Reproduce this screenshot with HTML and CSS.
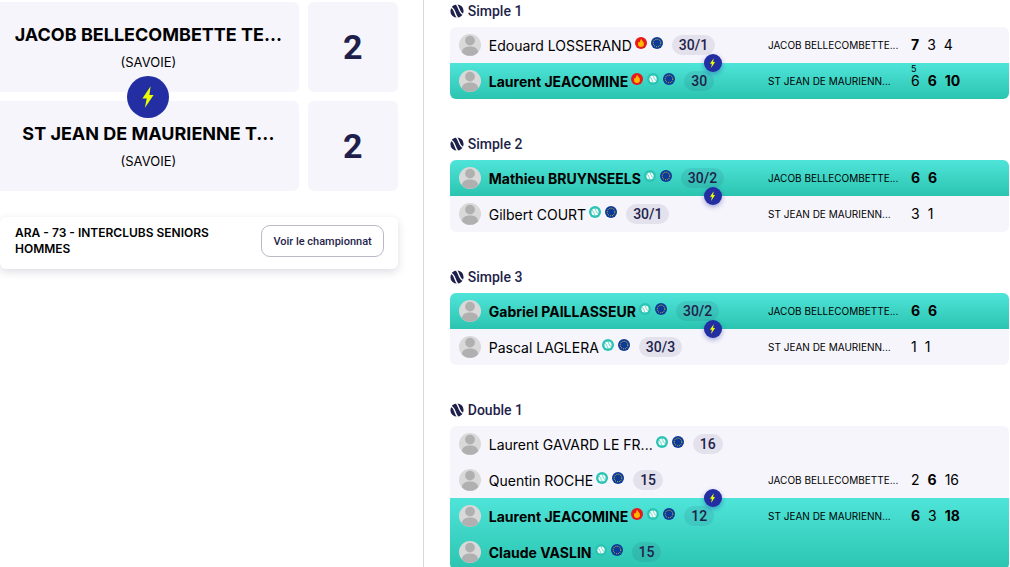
FILE: index.html
```html
<!DOCTYPE html>
<html lang="fr">
<head>
    <meta charset="utf-8">
    <meta name="viewport" content="width=device-width, initial-scale=1.0">
    <title>Feuille de match</title>
    <link rel="stylesheet" href="styles.css">
</head>
<body>
    <!-- Shared icons -->
    <svg class="sprite" aria-hidden="true">
        <symbol id="bolt" viewBox="0 0 12 22">
            <path fill="#eaff00" d="M8.6 0.3 L0.4 12.4 H4.7 L2.9 21.8 L11.6 8.9 H7.4 Z"/>
        </symbol>
        <symbol id="ball" viewBox="0 0 14 14">
            <circle cx="7" cy="7" r="6.6" fill="#1f1f4b"/>
            <path fill="none" stroke="#fff" stroke-width="1.4" d="M0.8 3.4 C5 4.2 4.2 9.4 7.6 14 M6.4 0 C9.6 4.4 9 9.2 13.4 10.4"/>
        </symbol>
        <symbol id="avatar" viewBox="0 0 22 22">
            <circle cx="11" cy="11" r="11" fill="#d9d9d9"/>
            <circle cx="11" cy="6.6" r="4.9" fill="#b0b0b0"/>
            <path fill="#b0b0b0" d="M2.8 18.2 C3.4 14 6.6 12.4 11 12.4 S18.6 14 19.2 18.2 A11 11 0 0 1 2.8 18.2 Z"/>
        </symbol>
        <symbol id="flame" viewBox="0 0 12 12">
            <circle cx="6" cy="6" r="6" fill="#e6191b"/>
            <path fill="#ffb800" d="M6.2 1.9 C6.8 3.6 9 4.6 9 7 C9 8.9 7.7 10 6 10 S3 8.9 3 7.1 C3 6 3.5 5.2 4.1 4.6 C4.3 5.2 4.6 5.4 5 5.5 C4.9 4 5.2 2.7 6.2 1.9 Z"/>
        </symbol>
        <symbol id="tennis" viewBox="0 0 12 12">
            <circle cx="6" cy="6" r="6" fill="#2bc4b4"/>
            <circle cx="6" cy="6" r="3.6" fill="#fff"/>
            <path fill="none" stroke="#2bc4b4" stroke-width="0.7" d="M2.6 4.2 C5 4.6 4.6 7.4 6.4 9.8 M5.6 2.2 C7.4 4.6 7.2 7.2 9.4 7.8"/>
        </symbol>
        <symbol id="europe" viewBox="0 0 12 12">
            <circle cx="6" cy="6" r="6" fill="#0b3a98"/>
            <circle cx="6" cy="6" r="3.8" fill="none" stroke="#f5d21b" stroke-width="1" stroke-dasharray="0.9 1.09"/>
        </symbol>
    </svg>

    <main class="page">
        <section class="summary">
            <div class="teams">
                <div class="team">
                    <h2>JACOB BELLECOMBETTE TE...</h2>
                    <p>(SAVOIE)</p>
                </div>
                <div class="total">2</div>
                <div class="team">
                    <span class="versus"><svg><use href="#bolt"/></svg></span>
                    <h2>ST JEAN DE MAURIENNE T...</h2>
                    <p>(SAVOIE)</p>
                </div>
                <div class="total">2</div>
            </div>
            <div class="championship">
                <h3>ARA - 73 - INTERCLUBS SENIORS HOMMES</h3>
                <button type="button">Voir le championnat</button>
            </div>
        </section>

        <section class="matches">
            <article class="match">
                <h4><svg><use href="#ball"/></svg>Simple 1</h4>
                <div class="card">
                    <div class="side">
                        <div class="row">
                            <div class="player">
                                <svg class="avatar"><use href="#avatar"/></svg>
                                <span class="name">Edouard LOSSERAND</span>
                                <span class="tags"><svg><use href="#flame"/></svg><svg><use href="#europe"/></svg></span>
                                <span class="rank">30/1</span>
                            </div>
                            <span class="club">JACOB BELLECOMBETTE...</span>
                            <div class="score"><b>7</b><span>3</span><span>4</span></div>
                        </div>
                    </div>
                    <div class="side win">
                        <span class="vs"><svg><use href="#bolt"/></svg></span>
                        <div class="row">
                            <div class="player">
                                <svg class="avatar"><use href="#avatar"/></svg>
                                <span class="name">Laurent JEACOMINE</span>
                                <span class="tags"><svg><use href="#flame"/></svg><svg><use href="#tennis"/></svg><svg><use href="#europe"/></svg></span>
                                <span class="rank">30</span>
                            </div>
                            <span class="club">ST JEAN DE MAURIENN...</span>
                            <div class="score"><span>6<sup>5</sup></span><b>6</b><b>10</b></div>
                        </div>
                    </div>
                </div>
            </article>

            <article class="match">
                <h4><svg><use href="#ball"/></svg>Simple 2</h4>
                <div class="card">
                    <div class="side win">
                        <div class="row">
                            <div class="player">
                                <svg class="avatar"><use href="#avatar"/></svg>
                                <span class="name">Mathieu BRUYNSEELS</span>
                                <span class="tags"><svg><use href="#tennis"/></svg><svg><use href="#europe"/></svg></span>
                                <span class="rank">30/2</span>
                            </div>
                            <span class="club">JACOB BELLECOMBETTE...</span>
                            <div class="score"><b>6</b><b>6</b></div>
                        </div>
                    </div>
                    <div class="side">
                        <span class="vs"><svg><use href="#bolt"/></svg></span>
                        <div class="row">
                            <div class="player">
                                <svg class="avatar"><use href="#avatar"/></svg>
                                <span class="name">Gilbert COURT</span>
                                <span class="tags"><svg><use href="#tennis"/></svg><svg><use href="#europe"/></svg></span>
                                <span class="rank">30/1</span>
                            </div>
                            <span class="club">ST JEAN DE MAURIENN...</span>
                            <div class="score"><span>3</span><span>1</span></div>
                        </div>
                    </div>
                </div>
            </article>

            <article class="match">
                <h4><svg><use href="#ball"/></svg>Simple 3</h4>
                <div class="card">
                    <div class="side win">
                        <div class="row">
                            <div class="player">
                                <svg class="avatar"><use href="#avatar"/></svg>
                                <span class="name">Gabriel PAILLASSEUR</span>
                                <span class="tags"><svg><use href="#tennis"/></svg><svg><use href="#europe"/></svg></span>
                                <span class="rank">30/2</span>
                            </div>
                            <span class="club">JACOB BELLECOMBETTE...</span>
                            <div class="score"><b>6</b><b>6</b></div>
                        </div>
                    </div>
                    <div class="side">
                        <span class="vs"><svg><use href="#bolt"/></svg></span>
                        <div class="row">
                            <div class="player">
                                <svg class="avatar"><use href="#avatar"/></svg>
                                <span class="name">Pascal LAGLERA</span>
                                <span class="tags"><svg><use href="#tennis"/></svg><svg><use href="#europe"/></svg></span>
                                <span class="rank">30/3</span>
                            </div>
                            <span class="club">ST JEAN DE MAURIENN...</span>
                            <div class="score"><span>1</span><span>1</span></div>
                        </div>
                    </div>
                </div>
            </article>

            <article class="match">
                <h4><svg><use href="#ball"/></svg>Double 1</h4>
                <div class="card">
                    <div class="side">
                        <div class="row">
                            <div class="player">
                                <svg class="avatar"><use href="#avatar"/></svg>
                                <span class="name">Laurent GAVARD LE FR...</span>
                                <span class="tags"><svg><use href="#tennis"/></svg><svg><use href="#europe"/></svg></span>
                                <span class="rank">16</span>
                            </div>
                        </div>
                        <div class="row">
                            <div class="player">
                                <svg class="avatar"><use href="#avatar"/></svg>
                                <span class="name">Quentin ROCHE</span>
                                <span class="tags"><svg><use href="#tennis"/></svg><svg><use href="#europe"/></svg></span>
                                <span class="rank">15</span>
                            </div>
                            <span class="club">JACOB BELLECOMBETTE...</span>
                            <div class="score"><span>2</span><b>6</b><span>16</span></div>
                        </div>
                    </div>
                    <div class="side win">
                        <span class="vs"><svg><use href="#bolt"/></svg></span>
                        <div class="row">
                            <div class="player">
                                <svg class="avatar"><use href="#avatar"/></svg>
                                <span class="name">Laurent JEACOMINE</span>
                                <span class="tags"><svg><use href="#flame"/></svg><svg><use href="#tennis"/></svg><svg><use href="#europe"/></svg></span>
                                <span class="rank">12</span>
                            </div>
                            <span class="club">ST JEAN DE MAURIENN...</span>
                            <div class="score"><b>6</b><span>3</span><b>18</b></div>
                        </div>
                        <div class="row">
                            <div class="player">
                                <svg class="avatar"><use href="#avatar"/></svg>
                                <span class="name">Claude VASLIN</span>
                                <span class="tags"><svg><use href="#tennis"/></svg><svg><use href="#europe"/></svg></span>
                                <span class="rank">15</span>
                            </div>
                        </div>
                    </div>
                </div>
            </article>
        </section>
    </main>
</body>
</html>
```
FILE: styles.css
```css
* {
    box-sizing: border-box;
}
body {
    margin: 0;
    background-color: #fff;
    color: #000;
    font-family: Inter, "Liberation Sans", sans-serif;
    font-size: 14px;
}
h2, h3, h4, p {
    margin: 0;
}
.sprite {
    position: absolute;
    width: 0;
    height: 0;
}
.page {
    display: flex;
    align-items: stretch;
    padding-right: 1px;
}

/* Left column: overall result */
.summary {
    flex: 0 0 42%;
    padding: 2px 25px 0 0;
    border-right: 1px solid #d6d6de;
}
.teams {
    display: grid;
    grid-template-columns: 1fr 90px;
    grid-auto-rows: 90px;
    gap: 9px;
}
.team, .total {
    position: relative;
    background-color: #f6f5fc;
    border-radius: 6px;
}
.team {
    padding: 20px 2px 0 0;
    text-align: center;
    border-radius: 0 6px 6px 0;
}
.team h2 {
    font-size: 18px;
    line-height: 26px;
    font-weight: 700;
    white-space: nowrap;
}
.team p {
    margin-top: 5px;
    line-height: 18px;
    font-size: 13px;
}
.total {
    display: flex;
    align-items: center;
    justify-content: center;
    color: #1f1f4b;
    font-family: Roboto, sans-serif;
    font-size: 34px;
    font-weight: 700;
}
.versus, .vs {
    position: absolute;
    display: flex;
    align-items: center;
    justify-content: center;
    background-color: #222ea2;
    border-radius: 50%;
}
.versus {
    top: -25px;
    left: calc(50% - 22px);
    width: 42px;
    height: 42px;
}
.versus svg {
    width: 12px;
    height: 22px;
}
.championship {
    display: flex;
    align-items: center;
    justify-content: space-between;
    margin-top: 26px;
    padding: 8px 14px 12px 15px;
    border-radius: 6px;
    box-shadow: 0 3px 8px rgba(31, 31, 75, 0.15);
}
.championship h3 {
    width: 210px;
    font-size: 12px;
    line-height: 16px;
    font-weight: 600;
}
.championship button {
    height: 32px;
    padding: 0 11px;
    background-color: #fff;
    border: 1px solid #b9b9c8;
    border-radius: 9px;
    color: #1f1f4b;
    font-family: Roboto, sans-serif;
    font-size: 11px;
    font-weight: 500;
    white-space: nowrap;
    cursor: pointer;
}

/* Right column: matches */
.matches {
    flex: 1;
    padding-left: 26px;
}
.match {
    margin-bottom: 34px;
}
.match:last-child {
    margin-bottom: 0;
}
.match h4 {
    display: flex;
    align-items: center;
    gap: 4px;
    height: 27px;
    padding-bottom: 5px;
    color: #1f1f4b;
    font-family: Roboto, sans-serif;
    font-size: 14px;
    font-weight: 500;
}
.match h4 svg {
    width: 14px;
    height: 14px;
}
.card {
    background-color: #f6f5fc;
    border-radius: 6px;
}
.side {
    position: relative;
}
.side.win {
    background: linear-gradient(#4fe4d9, #2bc4b0);
}
.side:first-child {
    border-radius: 6px 6px 0 0;
}
.side:last-child {
    border-radius: 0 0 6px 6px;
}
.row {
    display: grid;
    grid-template-columns: 1fr 143px 98px;
    align-items: center;
    height: 36px;
}
.player {
    display: flex;
    align-items: center;
    padding-left: 9px;
    white-space: nowrap;
}
.avatar {
    width: 22px;
    height: 22px;
    margin-right: 8px;
}
.win .name {
    font-weight: 700;
}
.tags {
    display: flex;
    gap: 4px;
    margin: 0 9px 4px 3px;
}
.tags svg {
    width: 12px;
    height: 12px;
}
.rank {
    padding: 0 7px;
    background-color: rgba(31, 31, 75, 0.09);
    border-radius: 10px;
    color: #1f1f4b;
    font-family: Roboto, sans-serif;
    font-size: 14px;
    font-weight: 500;
    line-height: 20px;
}
.club {
    font-size: 10px;
    white-space: nowrap;
}
.score {
    display: flex;
    gap: 8px;
    line-height: 12px;
}
.score > * {
    position: relative;
}
.score sup {
    position: absolute;
    top: -11px;
    left: 0;
    font-size: 9px;
    line-height: 10px;
}
.vs {
    top: -9px;
    left: 254px;
    width: 18px;
    height: 18px;
    box-shadow: 0 2px 5px rgba(34, 46, 162, 0.4);
}
.vs svg {
    width: 7px;
    height: 10px;
}
```
